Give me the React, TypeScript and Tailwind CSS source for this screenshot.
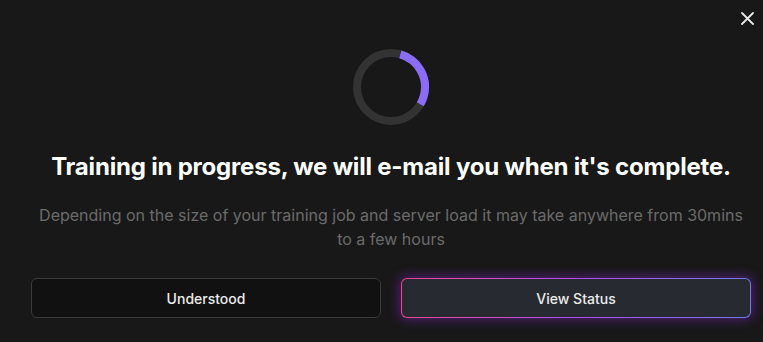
const Spinner = () => {
  const r = 34;
  const c = 2 * Math.PI * r;
  return (
    <svg width="80" height="80" viewBox="0 0 80 80" className="block">
      <circle cx="40" cy="40" r={r} fill="none" stroke="#333333" strokeWidth="8" />
      <circle
        cx="40"
        cy="40"
        r={r}
        fill="none"
        stroke="#8b6cf7"
        strokeWidth="8"
        strokeDasharray={`${c * 0.29} ${c}`}
        transform="rotate(-74 40 40)"
      />
    </svg>
  );
};

export default function App() {
  return (
    <main className="relative w-[763px] h-[342px] bg-[#181818] font-['Inter',sans-serif] overflow-hidden">
      {/* close */}
      <button className="absolute left-[741px] top-[12px] text-[#e8e8e8]">
        <svg width="13" height="13" viewBox="0 0 13 13" className="block">
          <path d="M1 1 L12 12 M12 1 L1 12" stroke="currentColor" strokeWidth="1.8" strokeLinecap="round" />
        </svg>
      </button>

      <section className="flex flex-col items-center pl-[31px] pr-[12px] pt-[47px]">
        <Spinner />

        <h1 className="mt-[24px] text-[24px] leading-[32px] font-bold text-white text-center tracking-[-0.2px]">
          Training in progress, we will e-mail you when it's complete.
        </h1>

        <p className="mt-[20px] px-[8px] text-[16px] leading-[24px] text-[#6b6b6b] text-center">
          Depending on the size of your training job and server load it may take anywhere from 30mins to a few hours
        </p>

        <div className="mt-[27px] w-full flex gap-[20px]">
          <button className="flex-1 h-[40px] rounded-md border border-[#3a3a3a] bg-[#111111] text-[14px] font-medium text-[#ececec]">
            Understood
          </button>
          <div className="flex-1 rounded-md p-px bg-gradient-to-r from-[#f0448f] via-[#b14cf0] to-[#6b7cf7] shadow-[0_0_12px_2px_rgba(140,40,220,0.45)]">
            <button className="w-full h-[38px] rounded-[5px] bg-[#272a31] text-[14px] font-medium text-[#ececec]">
              View Status
            </button>
          </div>
        </div>
      </section>
    </main>
  );
}
